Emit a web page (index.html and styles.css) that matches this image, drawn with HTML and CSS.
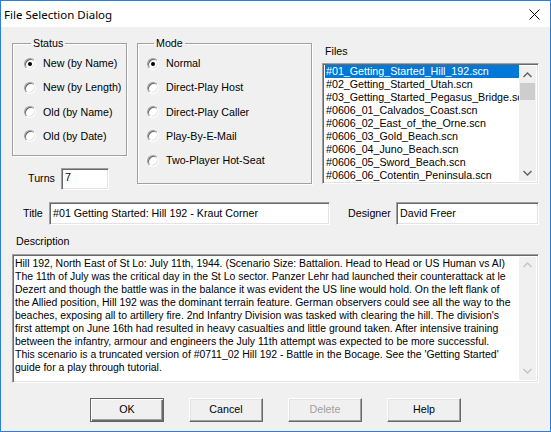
FILE: index.html
```html
<!DOCTYPE html>
<html lang="en">
<head>
    <meta charset="UTF-8">
    <title>File Selection Dialog</title>
    <link rel="stylesheet" href="styles.css">
</head>
<body>
<div class="ventana">
    <div class="titulo">
        <span>File Selection Dialog</span>
        <svg class="cerrar" width="11" height="11" viewBox="0 0 11 11"><path d="M0.5 0.5L10.5 10.5M10.5 0.5L0.5 10.5" stroke="#000" stroke-width="1"/></svg>
    </div>
    <div class="cliente">
        <div class="arriba">
            <div class="col-izq">
                <fieldset class="grupo status">
                    <legend>Status</legend>
                    <label class="opcion"><span class="radio on"></span>New (by Name)</label>
                    <label class="opcion"><span class="radio"></span>New (by Length)</label>
                    <label class="opcion"><span class="radio"></span>Old (by Name)</label>
                    <label class="opcion"><span class="radio"></span>Old (by Date)</label>
                </fieldset>
                <div class="turnos">
                    <span class="etiqueta">Turns</span>
                    <div class="caja caja-turnos">7</div>
                </div>
            </div>
            <fieldset class="grupo modo">
                <legend>Mode</legend>
                <label class="opcion"><span class="radio on"></span>Normal</label>
                <label class="opcion"><span class="radio"></span>Direct-Play Host</label>
                <label class="opcion"><span class="radio"></span>Direct-Play Caller</label>
                <label class="opcion"><span class="radio"></span>Play-By-E-Mail</label>
                <label class="opcion"><span class="radio"></span>Two-Player Hot-Seat</label>
            </fieldset>
            <div class="archivos">
                <div class="archivos-titulo">Files</div>
                <div class="lista caja">
                    <ul class="items">
                        <li class="sel">#01_Getting_Started_Hill_192.scn</li>
                        <li>#02_Getting_Started_Utah.scn</li>
                        <li>#03_Getting_Started_Pegasus_Bridge.scn</li>
                        <li>#0606_01_Calvados_Coast.scn</li>
                        <li>#0606_02_East_of_the_Orne.scn</li>
                        <li>#0606_03_Gold_Beach.scn</li>
                        <li>#0606_04_Juno_Beach.scn</li>
                        <li>#0606_05_Sword_Beach.scn</li>
                        <li>#0606_06_Cotentin_Peninsula.scn</li>
                    </ul>
                    <div class="barra">
                        <div class="flecha"><svg width="9" height="6" viewBox="0 0 9 6"><path d="M0.5 5L4.5 1L8.5 5" fill="none" stroke="#606060" stroke-width="1.4"/></svg></div>
                        <div class="pista"><div class="pulgar"></div></div>
                        <div class="flecha"><svg width="9" height="6" viewBox="0 0 9 6"><path d="M0.5 1L4.5 5L8.5 1" fill="none" stroke="#606060" stroke-width="1.4"/></svg></div>
                    </div>
                </div>
            </div>
        </div>

        <div class="fila-titulo">
            <span class="etiqueta et-titulo">Title</span>
            <div class="caja caja-titulo">#01 Getting Started: Hill 192 - Kraut Corner</div>
            <span class="etiqueta et-disenador">Designer</span>
            <div class="caja caja-disenador">David Freer</div>
        </div>

        <div class="desc-titulo">Description</div>
        <div class="desc caja">
            <div class="desc-texto">
                <div>Hill 192, North East of St Lo: July 11th, 1944. (Scenario Size: Battalion. Head to Head or US Human vs AI)</div>
                <div>The 11th of July was the critical day in the St Lo sector. Panzer Lehr had launched their counterattack at le</div>
                <div>Dezert and though the battle was in the balance it was evident the US line would hold. On the left flank of</div>
                <div>the Allied position, Hill 192 was the dominant terrain feature. German observers could see all the way to the</div>
                <div>beaches, exposing all to artillery fire. 2nd Infantry Division was tasked with clearing the hill. The division's</div>
                <div>first attempt on June 16th had resulted in heavy casualties and little ground taken. After intensive training</div>
                <div>between the infantry, armour and engineers the July 11th attempt was expected to be more successful.</div>
                <div>This scenario is a truncated version of #0711_02 Hill 192 - Battle in the Bocage. See the 'Getting Started'</div>
                <div>guide for a play through tutorial.</div>
            </div>
            <div class="barra apagada">
                <div class="flecha"><svg width="9" height="6" viewBox="0 0 9 6"><path d="M0.5 5L4.5 1L8.5 5" fill="none" stroke="#c4c4c4" stroke-width="1.4"/></svg></div>
                <div class="pista"></div>
                <div class="flecha"><svg width="9" height="6" viewBox="0 0 9 6"><path d="M0.5 1L4.5 5L8.5 1" fill="none" stroke="#c4c4c4" stroke-width="1.4"/></svg></div>
            </div>
        </div>

        <div class="botones">
            <div class="boton defecto">OK</div>
            <div class="boton">Cancel</div>
            <div class="boton apagado">Delete</div>
            <div class="boton">Help</div>
        </div>
    </div>
</div>
</body>
</html>
```

FILE: styles.css
```css
* {
    margin: 0;
    padding: 0;
    box-sizing: border-box;
}

body {
    background: #f0f0f0;
    font-family: "Liberation Sans", Arial, sans-serif;
    font-size: 10.7px;
    line-height: 13px;
    color: #000;
}

.ventana {
    width: 551px;
    height: 432px;
    border: 1px solid #2b7fd6;
    background: #f0f0f0;
    display: flex;
    flex-direction: column;
    overflow: hidden;
}

.titulo {
    height: 26px;
    flex-shrink: 0;
    background: #fff;
    display: flex;
    align-items: center;
    justify-content: space-between;
    padding: 0 10px 0 3px;
    font-family: "Noto Sans", sans-serif;
    font-size: 11.5px;
}

.cliente {
    flex: 1;
    padding: 10px 11px 0 11px;
}

/* parte de arriba: grupos y lista */
.arriba {
    display: flex;
    align-items: flex-start;
}

.col-izq {
    width: 115px;
}

.grupo {
    border: 1px solid #a0a0a0;
    box-shadow: inset 1px 1px #fff, 1px 1px #fff;
    display: flex;
    flex-direction: column;
    gap: 11.3px;
}

.grupo legend {
    padding: 0 2px;
    margin-left: 7px;
}

.status {
    width: 115px;
    padding: 7px 0 12px 11px;
}

.modo {
    width: 175px;
    margin-left: 10px;
    padding: 7px 0 16px 9px;
}

.opcion {
    display: flex;
    align-items: center;
    height: 13px;
    white-space: nowrap;
}

.radio {
    width: 12px;
    height: 12px;
    border-radius: 50%;
    background: #fff;
    border: 1px solid;
    border-color: #a0a0a0 #fff #fff #a0a0a0;
    box-shadow: inset 1px 1px #696969, inset -1px -1px #e3e3e3;
    margin-right: 7px;
    display: flex;
    align-items: center;
    justify-content: center;
}

.radio.on::after {
    content: "";
    width: 4px;
    height: 4px;
    border-radius: 50%;
    background: #000;
}

.caja {
    background: #fff;
    border: 1px solid;
    border-color: #a0a0a0 #fff #fff #a0a0a0;
    box-shadow: inset 1px 1px #696969, inset -1px -1px #e3e3e3;
}

.turnos {
    display: flex;
    align-items: center;
    margin-top: 12px;
    padding-left: 16px;
}

.turnos .etiqueta {
    width: 33px;
}

.caja-turnos {
    width: 48px;
    height: 22px;
    padding: 2px 3px;
}

/* lista de archivos */
.archivos {
    margin-left: 10px;
    width: 217px;
}

.archivos-titulo {
    margin-top: 8px;
    padding-left: 3px;
    height: 13px;
}

.lista {
    margin-top: 5px;
    height: 121px;
    display: flex;
    overflow: hidden;
}

.items {
    list-style: none;
    flex: 1;
    padding: 1px 0 0 2px;
    overflow: hidden;
}

.items li {
    height: 13px;
    line-height: 13px;
    padding-left: 1px;
    white-space: nowrap;
    overflow: hidden;
}

.items .sel {
    background: #0078d7;
    color: #fff;
}

.barra {
    width: 17px;
    background: #f0f0f0;
    display: flex;
    flex-direction: column;
    margin: 2px 2px 2px 0;
}

.flecha {
    height: 17px;
    display: flex;
    align-items: center;
    justify-content: center;
}

.pista {
    flex: 1;
}

.pulgar {
    height: 17px;
    margin: 0 1px;
    background: #cdcdcd;
}

/* titulo y disenador */
.fila-titulo {
    display: flex;
    align-items: center;
    margin-top: 12px;
}

.et-titulo {
    width: 26px;
    margin-left: 11px;
}

.caja-titulo {
    width: 281px;
    height: 23px;
    padding: 4px 3px;
    white-space: nowrap;
}

.et-disenador {
    margin-left: 18px;
    width: 48px;
}

.caja-disenador {
    flex: 1;
    height: 23px;
    padding: 4px 3px;
}

/* descripcion */
.desc-titulo {
    margin-top: 10px;
    padding-left: 4px;
    height: 13px;
}

.desc {
    margin-top: 6px;
    height: 129px;
    display: flex;
}

.desc-texto {
    flex: 1;
    padding: 2px 0 0 2px;
    font-size: 10.45px;
    white-space: nowrap;
    overflow: hidden;
}

/* botones */
.botones {
    display: flex;
    justify-content: center;
    gap: 25px;
    margin-top: 15px;
}

.boton {
    width: 74px;
    height: 24px;
    display: flex;
    align-items: center;
    justify-content: center;
    background: #f0f0f0;
    border: 1px solid;
    border-color: #fff #696969 #696969 #fff;
    box-shadow: inset -1px -1px #a0a0a0, inset 1px 1px #e3e3e3;
}

.boton.defecto {
    border: 1px solid #646464;
    box-shadow: inset 1px 1px #fff, inset -1px -1px #696969, inset -2px -2px #a0a0a0;
}

.boton.apagado {
    color: #a0a0a0;
}
```
